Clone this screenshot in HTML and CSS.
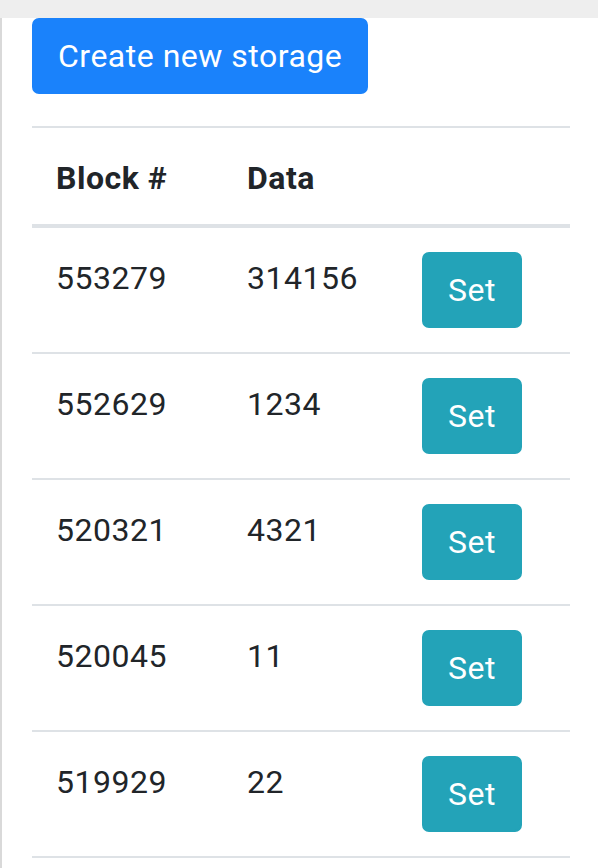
FILE: index.html
```html
<!DOCTYPE html>
<html>
<head>
<meta charset="utf-8">
<link rel="stylesheet" href="styles.css">
</head>
<body>
<div class="topbar"></div>
<main class="page">
  <button class="btn btn-primary">Create new storage</button>
  <table class="table">
    <thead>
      <tr><th class="c1">Block #</th><th class="c2">Data</th><th class="c3"></th></tr>
    </thead>
    <tbody>
      <tr><td>553279</td><td>314156</td><td class="act"><button class="btn btn-info">Set</button></td></tr>
      <tr><td>552629</td><td>1234</td><td class="act"><button class="btn btn-info">Set</button></td></tr>
      <tr><td>520321</td><td>4321</td><td class="act"><button class="btn btn-info">Set</button></td></tr>
      <tr><td>520045</td><td>11</td><td class="act"><button class="btn btn-info">Set</button></td></tr>
      <tr><td>519929</td><td>22</td><td class="act"><button class="btn btn-info">Set</button></td></tr>
    </tbody>
  </table>
</main>
</body>
</html>
```
FILE: styles.css
```css
html, body {
  margin: 0;
  padding: 0;
  background: #fff;
}
body {
  font-family: Roboto, "Liberation Sans", sans-serif;
  font-size: 32px;
  line-height: 48px;
  letter-spacing: 0.5px;
  color: #212529;
}
.topbar {
  height: 18px;
  background: #eeeeee;
}
.page {
  border-left: 2px solid #d9d9d9;
  padding-left: 30px;
  padding-right: 28px;
  min-height: 850px;
  box-sizing: border-box;
}
.btn {
  display: inline-block;
  font-family: inherit;
  font-size: 32px;
  line-height: 48px;
  letter-spacing: 0.5px;
  padding: 12px 24px;
  border: 2px solid transparent;
  border-radius: 7px;
  color: #fff;
  cursor: pointer;
}
.btn-primary {
  background: #1a82fb;
  border-color: #1a82fb;
  margin-bottom: 32px;
  vertical-align: top;
}
.btn-info {
  background: #23a3b8;
  border-color: #23a3b8;
}
.table {
  width: 100%;
  border-collapse: collapse;
  table-layout: fixed;
}
.table th,
.table td {
  box-sizing: border-box;
  padding: 26px 24px 22px;
  text-align: left;
  vertical-align: top;
  border-top: 2px solid #dee2e6;
}
.table td.act {
  padding: 24px;
}
.table th {
  font-weight: 700;
  border-bottom: 4px solid #dee2e6;
}
.table tbody tr:last-child td {
  border-bottom: 2px solid #dee2e6;
}
.c1 { width: 191px; }
.c2 { width: 175px; }
.table td .btn { vertical-align: top; }
```
